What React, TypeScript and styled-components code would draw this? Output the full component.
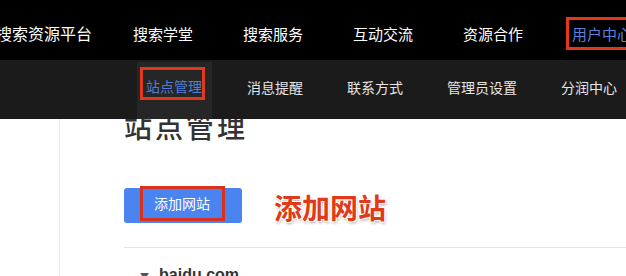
import React from 'react'
import styled, { createGlobalStyle } from 'styled-components'

const GlobalStyle = createGlobalStyle`
	html, body {
		margin: 0;
		padding: 0;
		background: #fff;
		overflow: hidden;
	}
	body {
		font-family: 'Noto Sans CJK SC', 'Noto Sans', sans-serif;
	}
`

const Page = styled.div`
	width: 626px;
	height: 276px;
	overflow: hidden;
	display: flex;
	flex-direction: column;
`

const Header = styled.header`
	position: relative;
	z-index: 2;
	flex: none;
`

const TopBar = styled.nav`
	height: 60px;
	background: #000;
	display: flex;
	align-items: center;
	padding-top: 6px;
	box-sizing: border-box;
	gap: 50px;
	white-space: nowrap;
`

const Brand = styled.span`
	color: #fff;
	font-size: 16px;
	width: 87px;
	margin-left: -4px;
	flex: none;
`

const TopItem = styled.span<{ $active?: boolean }>`
	font-size: 15px;
	line-height: 27px;
	flex: none;
	color: ${(p) => (p.$active ? '#5b80dc' : '#fff')};
	${(p) =>
		p.$active &&
		`
		border: 3px solid #e2391c;
		padding: 0 4px 0 3px;
		margin-left: -7px;
	`}
`

const SubBar = styled.nav`
	height: 59px;
	background: #1b1b1b;
	display: flex;
	align-items: stretch;
	padding: 2px 0 0 137px;
	box-sizing: border-box;
	gap: 26px;
	white-space: nowrap;
`

const SubItem = styled.div<{ $active?: boolean }>`
	padding: 0 9px;
	display: flex;
	align-items: center;
	font-size: 14px;
	color: #e6e6e6;
	background: ${(p) => (p.$active ? '#262626' : 'transparent')};
`

const Marked = styled.span`
	border: 3px solid #e2391c;
	line-height: 21px;
	padding: 6px 0 0 3px;
	margin: -14px -2px 0 -6px;
	color: #4f7fd6;
`

const SubLabel = styled.span`
	margin-top: -7px;
`

const Body = styled.div`
	flex: 1;
	display: grid;
	grid-template-columns: 60px 1fr;
`

const Sidebar = styled.aside`
	border-right: 1px solid #e6e6e6;
`

const Main = styled.main`
	padding-left: 64px;
`

const Title = styled.h1`
	margin: -7px 0 0;
	font-size: 28px;
	line-height: 28px;
	font-weight: 500;
	letter-spacing: 3px;
	color: #333;
`

const ActionRow = styled.div`
	display: flex;
	align-items: center;
	gap: 32px;
	margin-top: 43px;
	padding-bottom: 20px;
	border-bottom: 1px solid #e4e4e4;
`

const AddButton = styled.button`
	width: 118px;
	height: 35px;
	border: none;
	border-radius: 3px;
	background: #4a84f0;
	display: flex;
	align-items: center;
	justify-content: center;
	padding: 0;
	font-family: inherit;
	cursor: pointer;
`

const ButtonMark = styled.span`
	border: 3px solid #d9321c;
	color: #fff;
	font-size: 14px;
	line-height: 29px;
	padding: 0 12px 0 11px;
	margin: -3px 0 0 -1px;
`

const Callout = styled.span`
	font-size: 28px;
	font-weight: 700;
	color: #e03a18;
	text-shadow: -1px -1px 0 #fff, 1px -1px 0 #fff, -1px 1px 0 #fff, 1px 1px 0 #fff,
		1px 2px 3px rgba(0, 0, 0, 0.35);
	margin-top: 4px;
`

const SiteRow = styled.div`
	display: flex;
	align-items: flex-start;
	gap: 10px;
	padding: 19px 0 0 16px;
	color: #333;
`

const Caret = styled.span`
	font-size: 9px;
	line-height: 9px;
	color: #555;
	margin-top: 5px;
`

const SiteName = styled.span`
	font-family: 'Liberation Sans', Arial, sans-serif;
	font-size: 16px;
	line-height: 16px;
	font-weight: 700;
`

const topItems = ['搜索学堂', '搜索服务', '互动交流', '资源合作']
const subItems = ['消息提醒', '联系方式', '管理员设置', '分润中心']

const App: React.FunctionComponent = () => {
	return (
		<Page>
			<GlobalStyle />
			<Header>
				<TopBar>
					<Brand>搜索资源平台</Brand>
					{topItems.map((t) => (
						<TopItem key={t}>{t}</TopItem>
					))}
					<TopItem $active>用户中心</TopItem>
				</TopBar>
				<SubBar>
					<SubItem $active>
						<Marked>站点管理</Marked>
					</SubItem>
					{subItems.map((t) => (
						<SubItem key={t}>
							<SubLabel>{t}</SubLabel>
						</SubItem>
					))}
				</SubBar>
			</Header>
			<Body>
				<Sidebar />
				<Main>
					<Title>站点管理</Title>
					<ActionRow>
						<AddButton>
							<ButtonMark>添加网站</ButtonMark>
						</AddButton>
						<Callout>添加网站</Callout>
					</ActionRow>
					<SiteRow>
						<Caret>▼</Caret>
						<SiteName>baidu.com</SiteName>
					</SiteRow>
				</Main>
			</Body>
		</Page>
	)
}

export default App
